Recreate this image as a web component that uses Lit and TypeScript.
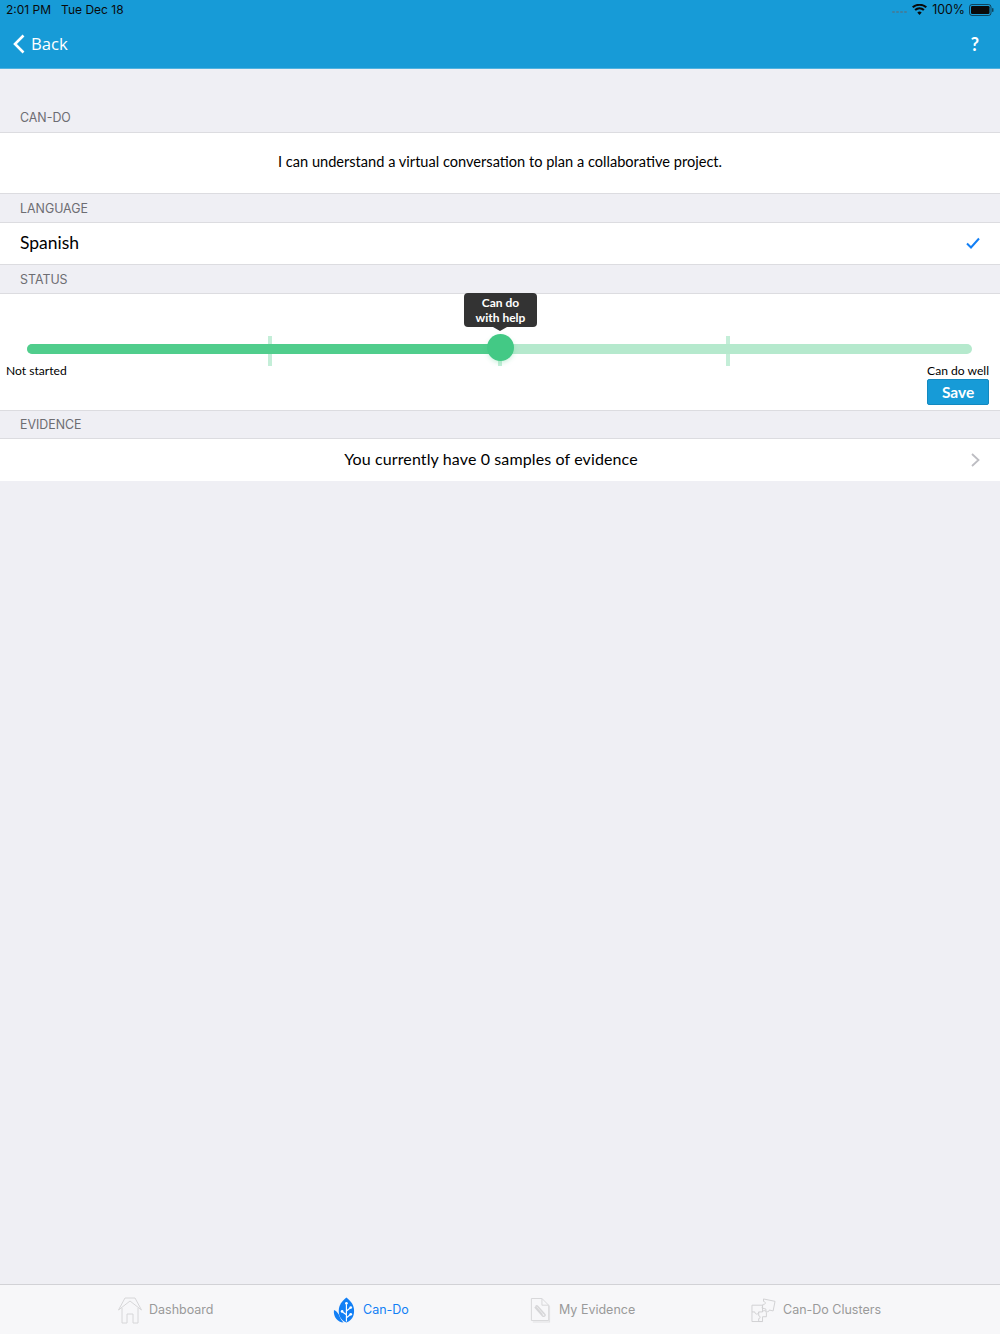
import { LitElement, html, css } from "lit";
import { customElement } from "lit/decorators.js";

@customElement("app-root")
export class AppRoot extends LitElement {
  static styles = css`
    :host { display: flex; flex-direction: column; height: 1334px; background: #efeff4; font-family: Inter, "Liberation Sans", sans-serif; overflow: hidden; color: #000; }
    .header { height: 69px; box-sizing: border-box; flex: none; background: #179bd7; border-bottom: 1px solid #4fb2e0; display: flex; flex-direction: column; }
    .status { height: 19px; display: flex; align-items: center; padding: 0 6px; font-size: 12px; color: #0a0a0a; white-space: nowrap; }
    .status .time { margin-right: 10px; }
    .status .right { margin-left: auto; display: flex; align-items: center; gap: 5px; }
    .status .pct { font-size: 12.4px; margin-right: -1px; }
    .dots { display: flex; gap: 1px; margin-top: 5px; }
    .dots i { width: 3px; height: 2px; background: #3f7f9f; border-radius: 1px; }
    .nav { flex: 1; display: flex; align-items: center; justify-content: space-between; padding: 0 21px 0 13px; color: #fff; }
    .back { display: flex; align-items: center; gap: 6px; font-family: "Open Sans", sans-serif; font-size: 16.7px; }
    .help { font-family: Lato, sans-serif; font-size: 18px; font-weight: 700; }
    .label { height: 28px; flex: none; box-sizing: border-box; display: flex; align-items: center; padding-left: 20px; font-size: 12.4px; color: #6d6d72; }
    .label.short { height: 27px; }
    .label.first { height: 63px; align-items: flex-end; padding-bottom: 7px; }
    .row { background: #fff; border-top: 1px solid #dcdce0; border-bottom: 1px solid #dcdce0; flex: none; box-sizing: border-box; }
    .cando { height: 62px; display: flex; align-items: center; justify-content: center; padding-bottom: 3px; font-family: Lato, sans-serif; font-size: 14.6px; }
    .lang { height: 43px; display: flex; align-items: center; justify-content: space-between; padding: 0 20px 2px; font-family: Lato, sans-serif; font-size: 17.5px; }
    .status-card { height: 118px; position: relative; font-family: Lato, sans-serif; font-size: 12.1px; }
    .slider { position: absolute; left: 27px; top: 50px; width: 945px; height: 10px; border-radius: 5px; background: #b5e9cd; }
    .fill { width: 473px; height: 100%; border-radius: 5px 0 0 5px; background: #50cd8c; }
    .tick { position: absolute; top: 42px; width: 4px; height: 30px; background: #c4eed8; }
    .thumb { position: absolute; left: 487px; top: 40px; width: 27px; height: 27px; border-radius: 50%; background: #43c985; box-shadow: 0 2px 4px rgba(67, 201, 133, 0.25); }
    .tip { position: absolute; left: 464px; top: -1px; width: 73px; height: 34px; border-radius: 4px; background: #333; color: #fff; font-size: 12px; font-weight: 700; line-height: 15px; text-align: center; display: flex; align-items: center; justify-content: center; }
    .tip::after { content: ""; position: absolute; left: 29px; bottom: -4px; border: 7px solid transparent; border-bottom: 0; border-top: 4px solid #333; }
    .ends { position: absolute; left: 6px; right: 11px; top: 69px; display: flex; justify-content: space-between; align-items: flex-start; }
    .end-right { display: flex; flex-direction: column; gap: 1px; align-items: stretch; }
    .save { height: 26px; background: #179bd7; border: 1px solid #1389c0; border-radius: 2px; color: #fff; font-family: Lato, sans-serif; font-weight: 700; font-size: 15.5px; padding: 0; }
    .evidence { height: 43px; display: flex; align-items: center; position: relative; font-family: Lato, sans-serif; font-size: 16px; border-bottom: 0; justify-content: center; padding: 0 18px 3px 0; letter-spacing: 0.12px; }
    .chev { position: absolute; right: 20px; top: 14px; }
    .spacer { flex: 1; }
    .tabs { position: relative; height: 50px; flex: none; box-sizing: border-box; background: #f7f7f9; border-top: 1px solid #d2d2d6; font-size: 12.5px; color: #9a9a9a; }
    .tab { position: absolute; display: flex; align-items: center; gap: 7px; top: 0; height: 48px; white-space: nowrap; }
    .tab svg { margin-top: 2px; }
    .tab.active { color: #127ff5; }
    .t1 { left: 118px; } .t2 { left: 333px; } .t3 { left: 529px; } .t4 { left: 751px; }
  `;

  render() {
    return html`
      <div class="header">
        <div class="status">
          <span class="time">2:01 PM</span><span>Tue Dec 18</span>
          <span class="right">
            <span class="dots"><i></i><i></i><i></i><i></i></span>
            <svg width="15" height="11" viewBox="0 0 15 11"><path fill="#0a0a0a" d="M7.5 11 5.3 8.4a3.4 3.4 0 0 1 4.4 0zM3.8 6.8 2.4 5.2a8 8 0 0 1 10.2 0l-1.4 1.6a5.8 5.8 0 0 0-7.4 0zM1.4 4 0 2.5a11.6 11.6 0 0 1 15 0L13.6 4a9.5 9.5 0 0 0-12.2 0z"/></svg>
            <span class="pct">100%</span>
            <svg width="25" height="12" viewBox="0 0 25 12"><rect x=".5" y=".5" width="21.5" height="11" rx="2.5" fill="none" stroke="#0a0a0a" stroke-opacity=".6"/><rect x="2" y="2" width="18.5" height="8" rx="1.3" fill="#0a0a0a"/><rect x="23" y="4" width="1.5" height="4" rx=".7" fill="#0a0a0a" fill-opacity=".6"/></svg>
          </span>
        </div>
        <div class="nav">
          <span class="back">
            <svg width="12" height="20" viewBox="0 0 12 20"><path d="M10.5 1.5 2 10l8.500 8.500" fill="none" stroke="#fff" stroke-width="2.600"/></svg>
            Back
          </span>
          <span class="help">?</span>
        </div>
      </div>

      <div class="label first">CAN-DO</div>
      <div class="row cando">I can understand a virtual conversation to plan a collaborative project.</div>
      <div class="label">LANGUAGE</div>
      <div class="row lang">
        <span>Spanish</span>
        <svg width="14" height="12" viewBox="0 0 14 12"><path d="M1 6.500 5 10.500 13 1.500" fill="none" stroke="#127ff5" stroke-width="2"/></svg>
      </div>
      <div class="label">STATUS</div>
      <div class="row status-card">
        <div class="tick" style="left:268px"></div>
        <div class="tick" style="left:498px"></div>
        <div class="tick" style="left:726px"></div>
        <div class="slider"><div class="fill"></div></div>
        <div class="thumb"></div>
        <div class="tip">Can do<br />with help</div>
        <div class="ends">
          <span>Not started</span>
          <span class="end-right">
            <span>Can do well</span>
            <button class="save">Save</button>
          </span>
        </div>
      </div>
      <div class="label short">EVIDENCE</div>
      <div class="row evidence">
        You currently have 0 samples of evidence
        <svg class="chev" width="9" height="14" viewBox="0 0 9 14"><path d="M1 1l6.500 6L1 13" fill="none" stroke="#bdbdc2" stroke-width="1.800"/></svg>
      </div>
      <div class="spacer"></div>
      <div class="tabs">
        <div class="tab t1">
          <svg width="24" height="28" viewBox="0 0 24 28" fill="none" stroke="#d6d6d8" stroke-width="1"><path d="M.5 14 7 2H17L23.500 14M.5 14 12 5 23.500 14M4 12V27H9V18H15V27H20V12"/></svg>
          <span>Dashboard</span>
        </div>
        <div class="tab t2 active">
          <svg width="23" height="26" viewBox="0 0 24 26"><path fill="#127ff5" d="M14 0c5 4 8 8 8 14 0 6-3 10-8 12-5-2-8-6-8-12 0-6 3-10 8-14z"/><path fill="#127ff5" d="M1 13c3 1 5 4 6 7 1 2 2 4 4 6-6 0-11-6-10-13z"/><path d="M14 25V7M14 18l-4-3M14 14l4-3M14 21l4-3" stroke="#fff" stroke-width="1.200" fill="none"/><circle cx="14" cy="6" r="1.400" fill="#fff"/><circle cx="9.500" cy="14.500" r="1.400" fill="#fff"/><circle cx="18.500" cy="10.500" r="1.400" fill="#fff"/><circle cx="18.500" cy="17.500" r="1.400" fill="#fff"/></svg>
          <span>Can-Do</span>
        </div>
        <div class="tab t3">
          <svg width="23" height="26" viewBox="0 0 24 26" fill="none" stroke="#d6d6d8"><path fill="#e2e2e4" stroke="none" d="M4 25h17V8l1 1v17H4z"/><path d="M2.500 1H13.500L20.500 8V24H2.500z"/><path d="M13.500 1V8H20.500"/><path stroke-width="1.500" d="M6 10l8 9c2 2 4-1 2-2l-7-8c-1-1-3 0-1 2l6 7"/></svg>
          <span>My Evidence</span>
        </div>
        <div class="tab t4">
          <svg width="25" height="26" viewBox="0 0 26 26" fill="none" stroke="#d0d0d2"><path d="M1 8H12V15H8C8 18 4 18 4 15H1zM1 15V25H12V20H16V16C16 13 12 13 12 15M12 25H8V22C10 22 10 19 8 19V15"/><path d="M13 1.500 25 4 23 14 19 13C19 16 14.500 15 15.500 12L11.500 11 12.500 7C15 8 16 4.500 13 4z"/></svg>
          <span>Can-Do Clusters</span>
        </div>
      </div>
    `;
  }
}
